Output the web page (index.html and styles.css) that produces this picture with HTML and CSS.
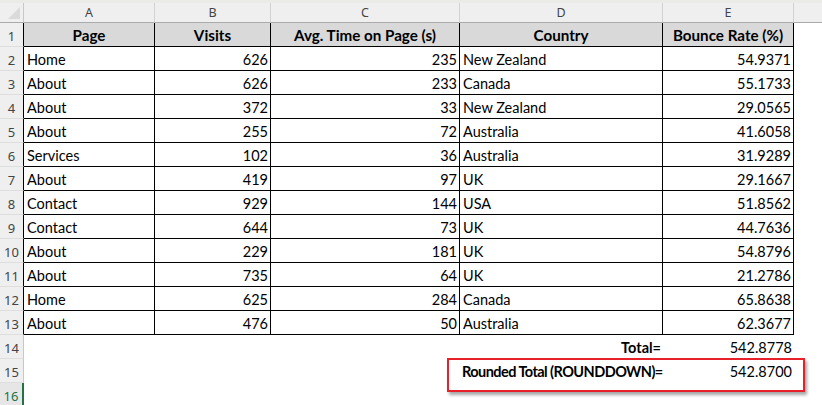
FILE: index.html
```html
<!DOCTYPE html>
<html>
<head>
<meta charset="utf-8">
<link rel="stylesheet" href="styles.css">
</head>
<body>
<div class="strip"></div>
<div class="sheet">
  <div class="ch corner"><span class="tri"></span></div>
  <div class="ch">A</div><div class="ch">B</div><div class="ch">C</div><div class="ch">D</div><div class="ch">E</div><div class="ch last"></div>

  <div class="rh dark">1</div>
  <div class="c hd">Page</div><div class="c hd">Visits</div><div class="c hd">Avg. Time on Page (s)</div><div class="c hd">Country</div><div class="c hd">Bounce Rate (%)</div><div class="e"></div>

  <div class="rh dark">2</div>
  <div class="c">Home</div><div class="c n">626</div><div class="c n">235</div><div class="c">New Zealand</div><div class="c n">54.9371</div><div class="e"></div>
  <div class="rh dark">3</div>
  <div class="c">About</div><div class="c n">626</div><div class="c n">233</div><div class="c">Canada</div><div class="c n">55.1733</div><div class="e"></div>
  <div class="rh dark">4</div>
  <div class="c">About</div><div class="c n">372</div><div class="c n">33</div><div class="c">New Zealand</div><div class="c n">29.0565</div><div class="e"></div>
  <div class="rh dark">5</div>
  <div class="c">About</div><div class="c n">255</div><div class="c n">72</div><div class="c">Australia</div><div class="c n">41.6058</div><div class="e"></div>
  <div class="rh dark">6</div>
  <div class="c">Services</div><div class="c n">102</div><div class="c n">36</div><div class="c">Australia</div><div class="c n">31.9289</div><div class="e"></div>
  <div class="rh dark">7</div>
  <div class="c">About</div><div class="c n">419</div><div class="c n">97</div><div class="c">UK</div><div class="c n">29.1667</div><div class="e"></div>
  <div class="rh dark">8</div>
  <div class="c">Contact</div><div class="c n">929</div><div class="c n">144</div><div class="c">USA</div><div class="c n">51.8562</div><div class="e"></div>
  <div class="rh dark">9</div>
  <div class="c">Contact</div><div class="c n">644</div><div class="c n">73</div><div class="c">UK</div><div class="c n">44.7636</div><div class="e"></div>
  <div class="rh dark">10</div>
  <div class="c">About</div><div class="c n">229</div><div class="c n">181</div><div class="c">UK</div><div class="c n">54.8796</div><div class="e"></div>
  <div class="rh dark">11</div>
  <div class="c">About</div><div class="c n">735</div><div class="c n">64</div><div class="c">UK</div><div class="c n">21.2786</div><div class="e"></div>
  <div class="rh dark">12</div>
  <div class="c">Home</div><div class="c n">625</div><div class="c n">284</div><div class="c">Canada</div><div class="c n">65.8638</div><div class="e"></div>
  <div class="rh dark">13</div>
  <div class="c">About</div><div class="c n">476</div><div class="c n">50</div><div class="c">Australia</div><div class="c n">62.3677</div><div class="e"></div>

  <div class="rh">14</div>
  <div class="e"></div><div class="e"></div><div class="e"></div><div class="e n b">Total=</div><div class="e n">542.8778</div><div class="e"></div>
  <div class="rh">15</div>
  <div class="e"></div><div class="e"></div><div class="e"></div><div class="e b lbl">Rounded Total (ROUNDDOWN)=</div><div class="e n">542.8700</div><div class="e"></div>
  <div class="rh sel">16</div>
  <div class="e"></div><div class="e"></div><div class="e"></div><div class="e"></div><div class="e"></div><div class="e"></div>

  <div class="redbox"></div>
</div>
</body>
</html>
```

FILE: styles.css
```css
* { box-sizing: border-box; }
html, body { margin: 0; padding: 0; background: #ffffff; overflow: hidden; }
body { width: 822px; height: 405px; }

.strip { height: 3px; background: #e9ebe4; }

.sheet {
  position: relative;
  display: grid;
  grid-template-columns: 24px 131px 116px 189px 203px 131px 1fr;
  grid-template-rows: 20px repeat(16, 24px);
  font-family: Lato, "Open Sans", sans-serif;
  font-size: 14.5px;
  color: #000;
}

.ch {
  background: #efefef;
  border-bottom: 1px solid #ababab;
  border-right: 1px solid #d2d2d2;
  font-family: "Noto Sans", sans-serif;
  font-size: 12.5px;
  color: #444;
  display: flex;
  align-items: center;
  justify-content: center;
  line-height: 19px;
}
.ch.last { border-right: none; }
.corner { position: relative; border-right: 1px solid #c8c8c8; }
.tri {
  position: absolute;
  right: 3px;
  bottom: 3px;
  width: 12px;
  height: 12px;
  background: #dadada;
  clip-path: polygon(100% 0, 100% 100%, 0 100%);
}

.rh {
  background: #efefef;
  border-right: 1px solid #c8c8c8;
  border-bottom: 1px solid #dedede;
  font-family: "Noto Sans", sans-serif;
  font-size: 13px;
  color: #444;
  display: flex;
  align-items: center;
  justify-content: center;
  padding-top: 2px;
}
.rh.dark { border-right: 1px solid #000; }
.rh.sel {
  color: #217346;
  border-right: 2px solid #217346;
  background: #e6e6e6;
}

.c, .e {
  line-height: 23px;
  padding: 1px 3px 0 3px;
  white-space: nowrap;
  overflow: visible;
}
.c {
  border-right: 1px solid #000;
  border-bottom: 1px solid #000;
}
.c.hd {
  background: #d9d9d9;
  font-weight: bold;
  font-size: 15.2px;
  text-align: center;
}
.n { text-align: right; padding-right: 2px; }
.b { font-weight: bold; }
.lbl { padding-left: 2px; letter-spacing: -0.55px; }

.redbox {
  position: absolute;
  left: 447px;
  top: 355px;
  width: 358px;
  height: 34px;
  border: 2px solid #e8202a;
  box-shadow: 2px 3px 3px rgba(0, 0, 0, 0.35);
  pointer-events: none;
}
```
